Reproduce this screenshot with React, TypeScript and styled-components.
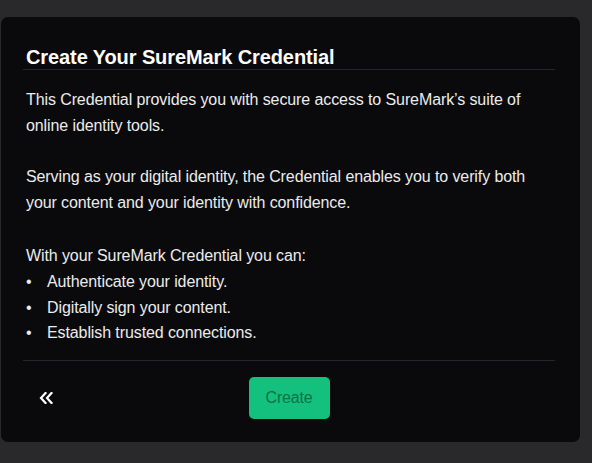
import styled, { createGlobalStyle } from "styled-components";

const GlobalStyle = createGlobalStyle`
  html, body {
    margin: 0;
    padding: 0;
    background: #29292c;
  }
  body {
    font-family: "Liberation Sans", Arial, sans-serif;
    color: #f2f2f2;
  }
`;

const Page = styled.div`
  padding: 17px 12px 21px 1px;
`;

const Card = styled.div`
  width: 579px;
  box-sizing: border-box;
  background-color: #0a0a0c;
  border-radius: 7px;
  padding: 0 25px 0 22px;
`;

const Title = styled.h2`
  margin: 0;
  padding: 29px 0 1px 3px;
  font-size: 20px;
  line-height: 22px;
  font-weight: 700;
  letter-spacing: -0.1px;
  color: #ffffff;
  border-bottom: 1px solid #26262a;
`;

const Body = styled.div`
  padding: 17px 12px 14px 3px;
  border-bottom: 1px solid #26262a;
`;

const Para = styled.p`
  margin: 0 0 25px;
  font-size: 16px;
  line-height: 26px;
  letter-spacing: -0.1px;
  color: #ececec;

  &:nth-child(2) {
    margin-bottom: 27px;
  }

  &:last-child {
    margin-bottom: 0;
  }
`;

const List = styled.ul`
  list-style: none;
  margin: 0;
  padding: 0;
`;

const Item = styled.li`
  display: flex;
  font-size: 16px;
  line-height: 25.5px;
  letter-spacing: -0.1px;
  color: #ececec;

  &::before {
    content: "•";
    width: 21px;
    flex-shrink: 0;
  }
`;

const Footer = styled.div`
  display: grid;
  grid-template-columns: 1fr auto 1fr;
  align-items: center;
  padding: 16px 0 23px;
`;

const BackButton = styled.button`
  justify-self: start;
  background: none;
  border: none;
  padding: 0;
  margin-left: 15px;
  width: 16px;
  height: 16px;
  display: flex;
  align-items: center;
  justify-content: center;
  cursor: pointer;
`;

const CreateButton = styled.button`
  width: 81px;
  height: 42px;
  border: none;
  border-radius: 5px;
  background-color: #13c07e;
  color: #0b7244;
  font-family: "Liberation Sans", Arial, sans-serif;
  font-size: 16px;
  letter-spacing: -0.2px;
  cursor: pointer;
`;

const bullets = [
  "Authenticate your identity.",
  "Digitally sign your content.",
  "Establish trusted connections.",
];

export default function App() {
  return (
    <>
      <GlobalStyle />
      <Page>
        <Card>
          <Title>Create Your SureMark Credential</Title>
          <Body>
            <Para>
              This Credential provides you with secure access to SureMark’s suite of online
              identity tools.
            </Para>
            <Para>
              Serving as your digital identity, the Credential enables you to verify both your
              content and your identity with confidence.
            </Para>
            <Para>
              With your SureMark Credential you can:
              <List>
                {bullets.map((b) => (
                  <Item key={b}>{b}</Item>
                ))}
              </List>
            </Para>
          </Body>
          <Footer>
            <BackButton aria-label="Back">
              <svg width="15" height="12" viewBox="0 0 15 12" fill="none">
                <path
                  d="M6.5 1 L2 6 L6.5 11 M12.5 1 L8 6 L12.5 11"
                  stroke="#ffffff"
                  strokeWidth="2.2"
                  strokeLinecap="square"
                />
              </svg>
            </BackButton>
            <CreateButton>Create</CreateButton>
            <span />
          </Footer>
        </Card>
      </Page>
    </>
  );
}
